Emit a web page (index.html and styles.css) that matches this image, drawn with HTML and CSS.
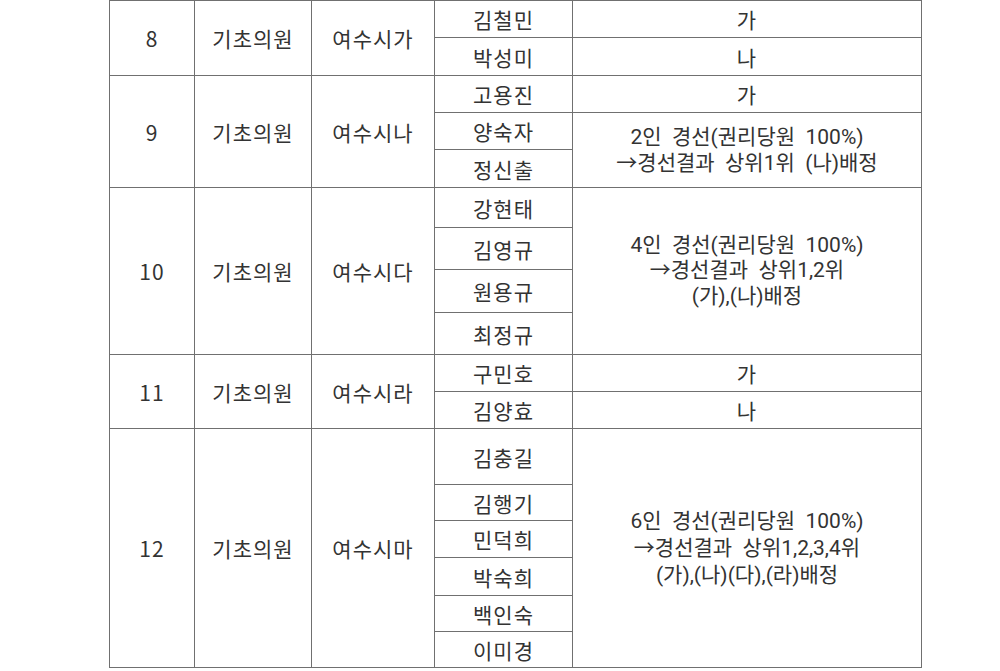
FILE: index.html
```html
<!DOCTYPE html>
<html lang="ko">
<head>
<meta charset="utf-8">
<link rel="stylesheet" href="styles.css">
</head>
<body>
<table class="tbl">
  <colgroup>
    <col class="c-no"><col class="c-kind"><col class="c-area"><col class="c-name"><col class="c-res">
  </colgroup>
  <tbody>
    <tr class="h37"><td rowspan="2">8</td><td rowspan="2">기초의원</td><td rowspan="2">여수시가</td><td>김철민</td><td>가</td></tr>
    <tr class="h38"><td>박성미</td><td>나</td></tr>

    <tr class="h37"><td rowspan="3">9</td><td rowspan="3">기초의원</td><td rowspan="3">여수시나</td><td>고용진</td><td>가</td></tr>
    <tr class="h37"><td>양숙자</td><td rowspan="2" class="multi m2">2인&nbsp; 경선(권리당원&nbsp; 100%)<br>→경선결과&nbsp; 상위1위&nbsp; (나)배정</td></tr>
    <tr class="h38"><td>정신출</td></tr>

    <tr class="h40"><td rowspan="4">10</td><td rowspan="4">기초의원</td><td rowspan="4">여수시다</td><td>강현태</td><td rowspan="4" class="multi m4">4인&nbsp; 경선(권리당원&nbsp; 100%)<br>→경선결과&nbsp; 상위1,2위<br>(가),(나)배정</td></tr>
    <tr class="h42"><td>김영규</td></tr>
    <tr class="h43"><td>원용규</td></tr>
    <tr class="h42"><td>최정규</td></tr>

    <tr class="h37"><td rowspan="2">11</td><td rowspan="2">기초의원</td><td rowspan="2">여수시라</td><td>구민호</td><td>가</td></tr>
    <tr class="h37"><td>김양효</td><td>나</td></tr>

    <tr class="h56"><td rowspan="6">12</td><td rowspan="6">기초의원</td><td rowspan="6">여수시마</td><td>김충길</td><td rowspan="6" class="multi m6">6인&nbsp; 경선(권리당원&nbsp; 100%)<br>→경선결과&nbsp; 상위1,2,3,4위<br>(가),(나)(다),(라)배정</td></tr>
    <tr class="h36"><td>김행기</td></tr>
    <tr class="h37"><td>민덕희</td></tr>
    <tr class="h38"><td>박숙희</td></tr>
    <tr class="h36"><td>백인숙</td></tr>
    <tr class="h36"><td>이미경</td></tr>
  </tbody>
</table>
</body>
</html>
```

FILE: styles.css
```css
html, body {
  margin: 0;
  padding: 0;
  background: #ffffff;
}

body {
  font-family: "Noto Sans CJK KR", "Noto Sans", sans-serif;
  color: #333333;
}

.tbl {
  margin-left: 109px;
  margin-top: 0;
  border-collapse: collapse;
  table-layout: fixed;
  width: 812px;
}

.c-no { width: 85px; }
.c-kind { width: 117px; }
.c-area { width: 123px; }
.c-name { width: 138px; }
.c-res { width: 349px; }

.tbl td {
  border: 1.5px solid #707070;
  padding: 0;
  text-align: center;
  vertical-align: middle;
  font-size: 21px;
  line-height: 24px;
  letter-spacing: 1px;
  white-space: nowrap;
}

.tbl .multi {
  font-family: Roboto, "Noto Sans CJK KR", sans-serif;
  letter-spacing: 0;
  line-height: 26px;
}

.tbl .m4 { line-height: 25.5px; }
.tbl .m6 { line-height: 27px; }

.h36 { height: 36px; }
.h37 { height: 37px; }
.h38 { height: 38px; }
.h40 { height: 40px; }
.h42 { height: 42px; }
.h43 { height: 43px; }
.h56 { height: 56px; }
```
